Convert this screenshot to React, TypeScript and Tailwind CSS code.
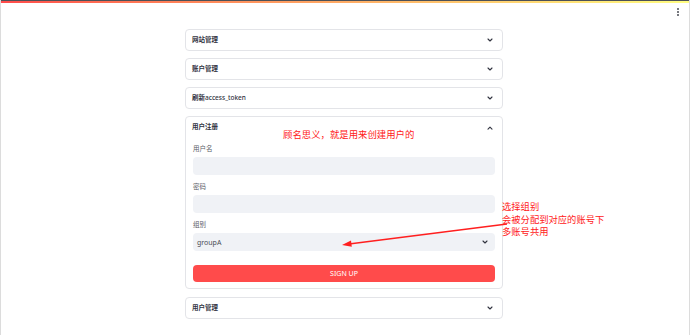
import React from "react";

const cjk = { fontFamily: '"Noto Sans", "Noto Sans CJK SC", sans-serif' };

function Chevron({ up = false }: { up?: boolean }) {
  return (
    <svg width="6" height="4" viewBox="0 0 6 4" className="shrink-0">
      <path
        d={up ? "M1 3.2 L3 1.2 L5 3.2" : "M1 1 L3 3 L5 1"}
        fill="none"
        stroke="#31333f"
        strokeWidth="1.1"
        strokeLinecap="round"
        strokeLinejoin="round"
      />
    </svg>
  );
}

function Collapsed({ title, latin }: { title: string; latin?: string }) {
  return (
    <div className="h-[22px] rounded-[4px] border border-[#e3e4e8] flex items-center justify-between pl-[6px] pr-[9px]">
      <span className="text-[6.5px] font-bold text-[#31333f] leading-none">
        {title}
        {latin && <span className="font-medium">{latin}</span>}
      </span>
      <Chevron />
    </div>
  );
}

function Field({ label, first = false }: { label: string; first?: boolean }) {
  return (
    <>
      <div className={`${first ? "mt-[6px]" : "mt-[7px]"} mb-[3px] h-[10px] flex items-center text-[6.5px] text-[#5a5c66] leading-none`}>
        {label}
      </div>
      <div className="h-[18px] rounded-[4px] bg-[#f0f2f6]" />
    </>
  );
}

export default function App() {
  return (
    <div className="relative w-[690px] h-[335px] bg-white border-x border-[#dcdcdc] overflow-hidden" style={cjk}>
      <div className="h-px bg-[#4d5157]" />
      <div className="h-[2px] bg-gradient-to-r from-[#ff4b4b] to-[#fffd80]" />

      {/* toolbar */}
      <div className="h-[18px] flex items-center justify-end pr-[10px]">
        <div className="flex flex-col gap-[1px]">
          <span className="w-[2px] h-[2px] rounded-full bg-[#4a4c55]" />
          <span className="w-[2px] h-[2px] rounded-full bg-[#4a4c55]" />
          <span className="w-[2px] h-[2px] rounded-full bg-[#4a4c55]" />
        </div>
      </div>

      {/* main column */}
      <div className="pt-[8px] pl-[184px] w-[502px] flex flex-col gap-[7px]">
        <Collapsed title="网站管理" />
        <Collapsed title="账户管理" />
        <Collapsed title="刷新" latin="access_token" />

        <div className="rounded-[4px] border border-[#e3e4e8] px-[7px] pb-[6px]">
          <div className="h-[21px] flex items-center justify-between pr-[2px] -ml-px">
            <span className="text-[6.5px] font-bold text-[#31333f] leading-none">用户注册</span>
            <Chevron up />
          </div>
          <Field label="用户名" first />
          <Field label="密码" />
          <div className="mt-[7px] mb-[3px] h-[10px] flex items-center text-[6.5px] text-[#5a5c66] leading-none">组别</div>
          <div className="h-[18px] rounded-[4px] bg-[#f0f2f6] flex items-center justify-between pl-[4px] pr-[7px]">
            <span className="text-[7px] text-[#4a4c55] leading-none">groupA</span>
            <Chevron />
          </div>
          <button className="mt-[14px] w-full h-[17px] rounded-[4px] bg-[#ff4b4b] text-white text-[7px] leading-none flex items-center justify-center">
            SIGN UP
          </button>
        </div>

        <div className="mt-px">
          <Collapsed title="用户管理" />
        </div>
      </div>

      {/* annotations */}
      <div className="absolute left-[282px] top-[128px] text-[9.4px] leading-[14px] text-[#ff2020] whitespace-nowrap">
        顾名思义，就是用来创建用户的
      </div>
      <div className="absolute left-[501px] top-[201px] text-[9.3px] leading-[12.6px] text-[#ff2020] whitespace-nowrap">
        <div>选择组别</div>
        <div>会被分配到对应的账号下</div>
        <div>多账号共用</div>
      </div>
      <svg className="absolute left-0 top-0 pointer-events-none" width="690" height="335">
        <line x1="506" y1="224" x2="348" y2="244" stroke="#ff1f1f" strokeWidth="1.3" />
        <path d="M341 245 L350 240.6 L350.8 246.8 Z" fill="#ff1f1f" />
      </svg>
    </div>
  );
}
